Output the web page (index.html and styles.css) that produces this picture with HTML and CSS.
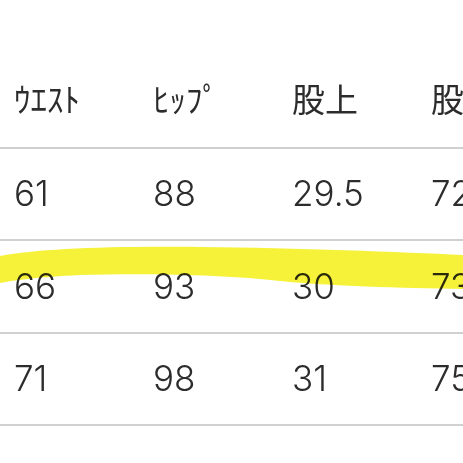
FILE: index.html
```html
<!DOCTYPE html>
<html lang="ja">
<head>
<meta charset="utf-8">
<title>サイズ表</title>
<link rel="stylesheet" href="styles.css">
</head>
<body>
<div class="page">
  <div class="table">
    <div class="row head">
      <div class="cell">ｳｴｽﾄ</div>
      <div class="cell">ﾋｯﾌﾟ</div>
      <div class="cell">股上</div>
      <div class="cell">股下</div>
    </div>
    <div class="row">
      <div class="cell num">61</div>
      <div class="cell num">88</div>
      <div class="cell num">29.5</div>
      <div class="cell num">72</div>
    </div>
    <div class="row">
      <div class="cell num">66</div>
      <div class="cell num">93</div>
      <div class="cell num">30</div>
      <div class="cell num">73</div>
    </div>
    <div class="row">
      <div class="cell num">71</div>
      <div class="cell num">98</div>
      <div class="cell num">31</div>
      <div class="cell num">75</div>
    </div>
  </div>
  <svg class="marker" viewBox="0 0 463 463" width="463" height="463" aria-hidden="true">
    <path d="M0,256 C40,249 100,246 200,247 C300,248 400,252 463,255 L463,289 C400,288 330,286 280,281 C230,275 150,273 80,275 C40,277 15,280 0,283 Z" fill="#f6f23a"/>
  </svg>
</div>
</body>
</html>
```
FILE: styles.css
```css
html, body {
  margin: 0;
  padding: 0;
  background: #ffffff;
}
.page {
  position: relative;
  width: 463px;
  height: 463px;
  overflow: hidden;
}
.table {
  padding-top: 56px;
  width: 600px;
}
.row {
  display: grid;
  grid-template-columns: repeat(4, 139px);
  padding-left: 14px;
  height: 92.5px;
  box-sizing: border-box;
  align-items: center;
  border-bottom: 2px solid #d0d0d0;
  color: #2c2c2c;
}
.cell {
  white-space: nowrap;
  font-family: "Noto Sans CJK JP", sans-serif;
  font-size: 33px;
  line-height: 1;
}
.head .cell {
  margin-top: -6px;
}
.num {
  font-family: Inter, "Noto Sans", sans-serif;
  font-size: 35px;
  font-weight: 300;
}
.marker {
  position: absolute;
  top: 0;
  left: 0;
  mix-blend-mode: multiply;
  pointer-events: none;
}
```
